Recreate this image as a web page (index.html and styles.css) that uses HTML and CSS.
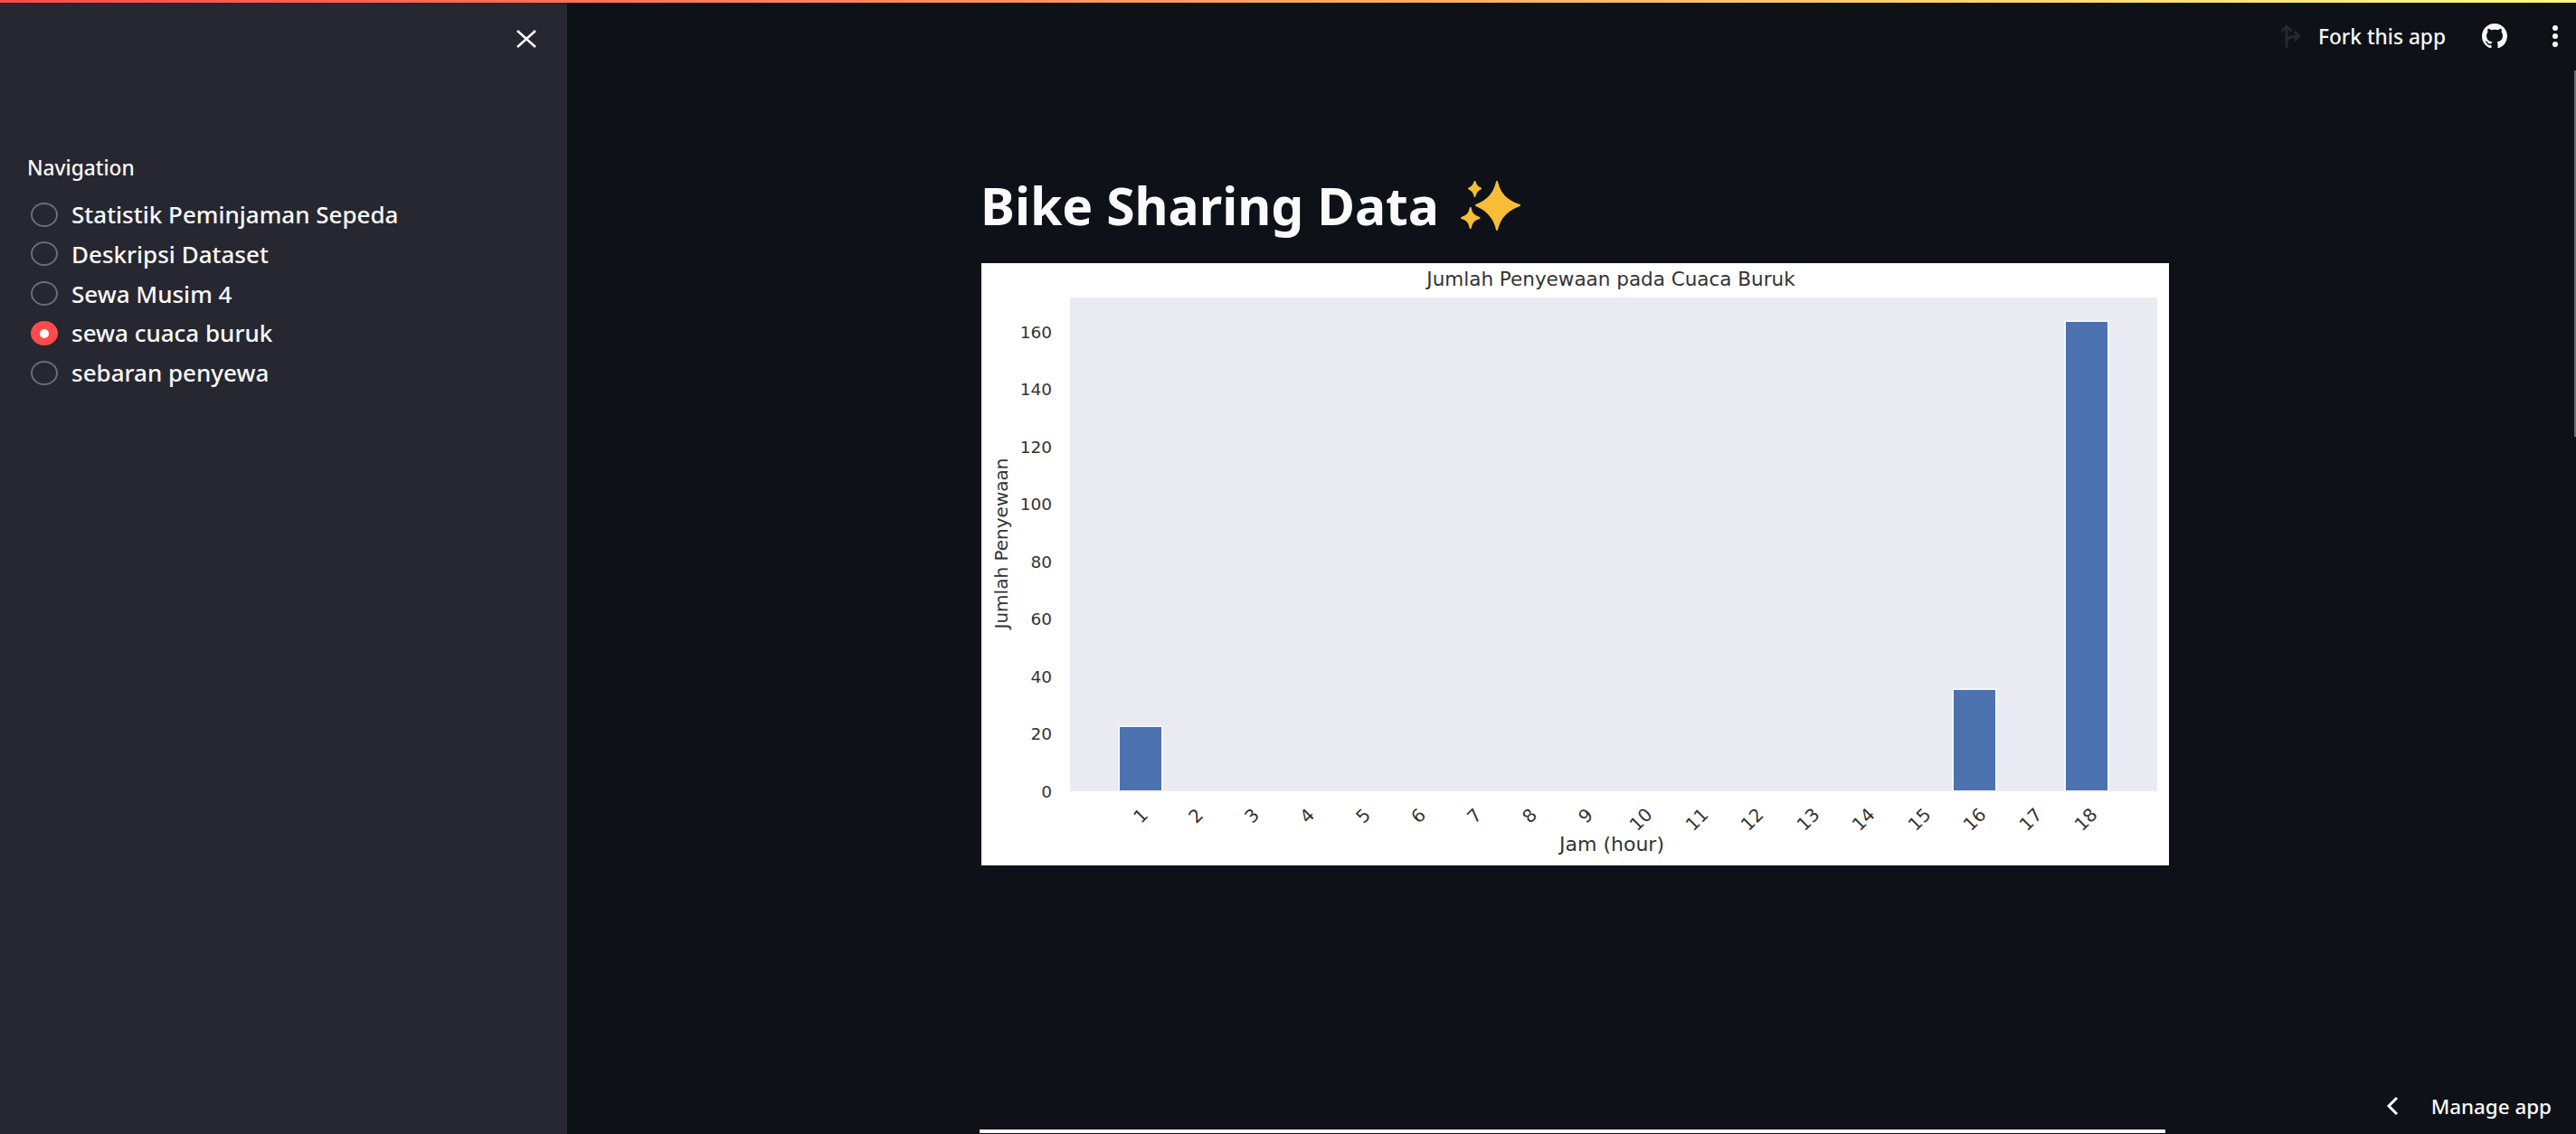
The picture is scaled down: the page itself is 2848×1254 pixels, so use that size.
FILE: index.html
```html
<!DOCTYPE html>
<html lang="id">
<head>
<meta charset="utf-8">
<title>Bike Sharing Data</title>
<link rel="stylesheet" href="styles.css">
</head>
<body>
<div class="decoration"></div>
<div class="app">
  <aside class="sidebar">
    <div class="sidebar-close">
      <svg class="close-icon" viewBox="0 0 22 20"><path d="M1 1 21 19M21 1 1 19"/></svg>
    </div>
    <div class="nav-title">Navigation</div>
    <div class="radio-group">
      <div class="radio-row"><span class="radio"></span><span>Statistik Peminjaman Sepeda</span></div>
      <div class="radio-row"><span class="radio"></span><span>Deskripsi Dataset</span></div>
      <div class="radio-row"><span class="radio"></span><span>Sewa Musim 4</span></div>
      <div class="radio-row"><span class="radio radio-on"></span><span>sewa cuaca buruk</span></div>
      <div class="radio-row"><span class="radio"></span><span>sebaran penyewa</span></div>
    </div>
  </aside>
  <main class="main">
    <header class="toolbar">
      <svg class="fork-icon" viewBox="0 0 22 28"><path d="M7 27V3M1.5 8.5 7 3l5.5 5.5M7 22c0-6 3-8 14-8M16 9l5 5-5 5"/></svg>
      <span class="fork-text">Fork this app</span>
      <svg class="gh-icon" viewBox="0 0 16 16"><path d="M8 0C3.58 0 0 3.58 0 8c0 3.54 2.29 6.53 5.47 7.59.4.07.55-.17.55-.38 0-.19-.01-.82-.01-1.49-2.01.37-2.53-.49-2.69-.94-.09-.23-.48-.94-.82-1.13-.28-.15-.68-.52-.01-.53.63-.01 1.08.58 1.23.82.72 1.21 1.87.87 2.33.66.07-.52.28-.87.51-1.07-1.78-.2-3.64-.89-3.64-3.95 0-.87.31-1.59.82-2.15-.08-.2-.36-1.02.08-2.12 0 0 .67-.21 2.2.82.64-.18 1.32-.27 2-.27s1.36.09 2 .27c1.53-1.04 2.2-.82 2.2-.82.44 1.1.16 1.92.08 2.12.51.56.82 1.27.82 2.15 0 3.07-1.87 3.75-3.65 3.95.29.25.54.73.54 1.48 0 1.07-.01 1.93-.01 2.2 0 .21.15.46.55.38A8.01 8.01 0 0 0 16 8c0-4.42-3.58-8-8-8z"/></svg>
      <span class="menu-dots"><i></i><i></i><i></i></span>
    </header>
    <div class="content">
      <h1 class="title">Bike Sharing Data
        <svg class="sparkle" viewBox="0 0 66 55"><path d="M40 1C43 15 51 22 65 27 51 32 43 40 40 54 37 40 29 32 17 27 29 22 37 15 40 1z"/><path d="M15.500 1C16.500 5 18 7 22 8.500 18 10 16.500 12 15.500 17 14.500 12 13 10 9 8.500 13 7 14.500 5 15.500 1z"/><path d="M10.700 30C11.700 36 14 39 20.500 41 14 43 11.700 46 10.700 52 9.700 46 7.500 43 1 41 7.500 39 9.700 36 10.700 30z"/></svg>
      </h1>
      <div class="chart">
        <svg class="chart-svg" viewBox="0 0 1313 666" width="1313" height="666">
          <rect class="plot" x="98" y="38" width="1202" height="546"/>
          <text class="chart-title" x="696" y="25">Jumlah Penyewaan pada Cuaca Buruk</text>
          <g class="y-ticks">
            <text x="78" y="591">0</text><text x="78" y="527">20</text><text x="78" y="464">40</text><text x="78" y="400">60</text><text x="78" y="337">80</text><text x="78" y="273">100</text><text x="78" y="210">120</text><text x="78" y="146">140</text><text x="78" y="83">160</text>
          </g>
          <text class="axis-label axis-label-y" transform="translate(29 310) rotate(-90)">Jumlah Penyewaan</text>
          <text class="axis-label" x="697" y="650">Jam (hour)</text>
          <g class="bars">
            <rect x="152" y="512" width="48" height="72"/>
            <rect x="1074" y="471" width="48" height="113"/>
            <rect x="1198" y="64" width="48" height="520"/>
          </g>
          <g class="x-ticks">
            <text transform="translate(181 616) rotate(-45)">1</text>
            <text transform="translate(242 616) rotate(-45)">2</text>
            <text transform="translate(304 616) rotate(-45)">3</text>
            <text transform="translate(365 616) rotate(-45)">4</text>
            <text transform="translate(427 616) rotate(-45)">5</text>
            <text transform="translate(488 616) rotate(-45)">6</text>
            <text transform="translate(550 616) rotate(-45)">7</text>
            <text transform="translate(611 616) rotate(-45)">8</text>
            <text transform="translate(673 616) rotate(-45)">9</text>
            <text transform="translate(734 620) rotate(-45)">10</text>
            <text transform="translate(796 620) rotate(-45)">11</text>
            <text transform="translate(857 620) rotate(-45)">12</text>
            <text transform="translate(919 620) rotate(-45)">13</text>
            <text transform="translate(980 620) rotate(-45)">14</text>
            <text transform="translate(1042 620) rotate(-45)">15</text>
            <text transform="translate(1103 620) rotate(-45)">16</text>
            <text transform="translate(1165 620) rotate(-45)">17</text>
            <text transform="translate(1226 620) rotate(-45)">18</text>
          </g>
        </svg>
      </div>
      <div class="next-chart"></div>
    </div>
  </main>
</div>
<div class="scroll-thumb"></div>
<div class="manage">
  <svg class="chevron" viewBox="0 0 14 22"><path d="M12 2 3 11l9 9"/></svg>
  <span>Manage app</span>
</div>
</body>
</html>
```
FILE: styles.css
```css
* { box-sizing: border-box; }
html, body { margin: 0; height: 100%; overflow: hidden; background: #0e1117; }
body { font-family: "Noto Sans", sans-serif; color: #fafafa; position: relative; }

.decoration { height: 3px; background: linear-gradient(90deg, #ff4b4b, #fffd80); }
.app { display: flex; height: 1251px; }

.sidebar { width: 627px; flex: none; background: #262730; padding: 30px 34px 0 30px; }
.sidebar-close { display: flex; justify-content: flex-end; height: 20px; }
.close-icon { width: 22px; height: 20px; fill: none; stroke: #fafafa; stroke-width: 2.6; }
.nav-title { margin-top: 119px; font-size: 22.7px; line-height: 28px; font-weight: 500; }
.radio-group { margin-top: 22px; display: flex; flex-direction: column; gap: 13.75px; font-size: 26px; font-weight: 500; }
.radio-row { display: flex; align-items: center; height: 30px; gap: 15px; padding-left: 4px; line-height: 30px; white-space: nowrap; }
.radio { width: 30px; height: 27px; flex: none; border-radius: 50%; border: 2px solid #6c6d74; background: #262730; }
.radio-on { border: 0; background: #ff4b4b; position: relative; }
.radio-on::after { content: ""; position: absolute; left: 10px; top: 9px; width: 10px; height: 10px; border-radius: 50%; background: #fff; }

.main { flex: 1; min-width: 0; position: relative; }
.toolbar { display: flex; align-items: center; height: 74px; padding-right: 20px; justify-content: flex-end; font-size: 22.7px; font-weight: 500; }
.fork-icon { width: 22px; height: 28px; fill: none; stroke: #262730; stroke-width: 3; }
.fork-text { margin-left: 20px; }
.gh-icon { width: 30px; height: 28px; margin-left: 39px; fill: #fafafa; }
.menu-dots { display: flex; flex-direction: column; gap: 3px; margin-left: 49px; }
.menu-dots i { width: 6px; height: 6px; border-radius: 50%; background: #fafafa; }

.content { width: 1313px; margin-left: 458px; }
.title { margin: 112px 0 0 -1px; height: 102px; font-size: 57px; line-height: 76px; font-weight: 700; display: flex; align-items: flex-start; white-space: nowrap; }
.sparkle { width: 66px; height: 55px; margin: 11px 0 0 24px; fill: #f8bd38; stroke: #f8bd38; stroke-width: 2; stroke-linejoin: round; flex: none; }
.chart { height: 666px; background: #fff; }
.chart-svg { display: block; }
.plot { fill: #eaeaf2; }
.chart-title { font-family: "DejaVu Sans", sans-serif; font-size: 21.5px; text-anchor: middle; fill: #333; }
.axis-label { font-family: "DejaVu Sans", sans-serif; font-size: 22px; text-anchor: middle; fill: #333; }
.axis-label-y { font-size: 20px; }
.y-ticks text { font-family: "DejaVu Sans", sans-serif; font-size: 18.5px; text-anchor: end; fill: #333; }
.x-ticks text { font-family: "DejaVu Sans", sans-serif; font-size: 20px; text-anchor: middle; fill: #333; }
.bars rect { fill: #4c72b0; stroke: #f4f5fa; stroke-width: 2; }
.next-chart { margin: 292px 4px 0 -2px; height: 4px; background: #fff; }

.scroll-thumb { position: absolute; right: 0; top: 78px; width: 2px; height: 405px; background: #6b6c70; }
.manage { position: absolute; right: 27px; top: 1208px; display: flex; align-items: center; gap: 36px; font-size: 22.4px; font-weight: 500; height: 30px; }
.chevron { width: 14px; height: 22px; fill: none; stroke: #fafafa; stroke-width: 3; }
```
